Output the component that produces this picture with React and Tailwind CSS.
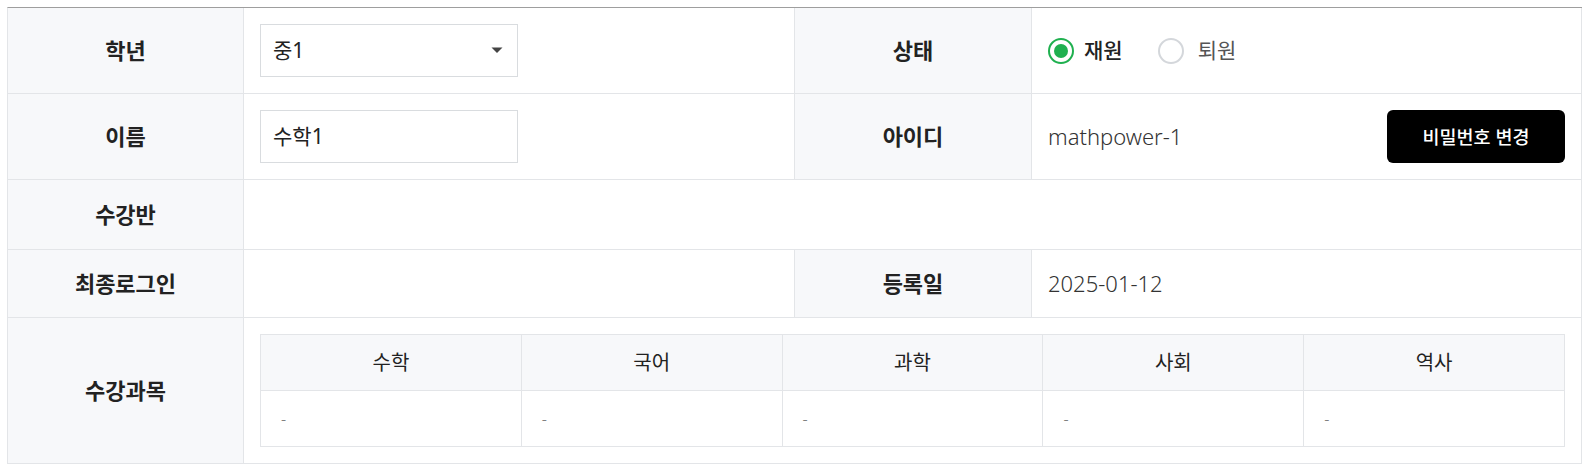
import React from "react";

const font = { fontFamily: '"Noto Sans", "Noto Sans CJK KR", sans-serif' };

function Label({ children, className = "" }) {
  return (
    <div
      className={
        "flex items-center justify-center border-r border-b border-[#e3e5e8] bg-[#f7f8fa] text-[22px] font-bold text-[#222] " +
        className
      }
    >
      {children}
    </div>
  );
}

function Value({ children, className = "" }) {
  return (
    <div
      className={
        "flex items-center border-r border-b border-[#e3e5e8] bg-white px-4 text-[22px] text-[#333] " +
        className
      }
    >
      {children}
    </div>
  );
}

export default function App() {
  const subjects = ["수학", "국어", "과학", "사회", "역사"];
  return (
    <div className="bg-white pt-[7px] px-[7px] h-[470px]" style={font}>
      <div className="grid grid-cols-[236px_551px_237px_550px] border-t border-t-[#9e9e9e] border-l border-l-[#e3e5e8]">
        {/* Row 1 */}
        <Label className="h-[86px]">학년</Label>
        <Value className="h-[86px]">
          <div className="flex h-[53px] w-[258px] items-center justify-between border border-[#d9dcdf] bg-white pl-3 pr-3">
            <span className="text-[21px] text-[#222]">중1</span>
            <svg width="12" height="7" viewBox="0 0 12 7" className="mr-[2px]">
              <path d="M0.5 0.5 L11.5 0.5 L6 6 Z" fill="#444" />
            </svg>
          </div>
        </Value>
        <Label className="h-[86px]">상태</Label>
        <Value className="h-[86px]">
          <div className="flex items-center text-[21px]">
            <span className="flex h-[26px] w-[26px] items-center justify-center rounded-full border-2 border-[#1fb04f]">
              <span className="h-[14px] w-[14px] rounded-full bg-[#1fb04f]" />
            </span>
            <span className="ml-[10px] font-medium text-[#222]">재원</span>
            <span className="ml-[35px] h-[26px] w-[26px] rounded-full border-2 border-[#d4d7db]" />
            <span className="ml-[14px] text-[#555]">퇴원</span>
          </div>
        </Value>

        {/* Row 2 */}
        <Label className="h-[86px]">이름</Label>
        <Value className="h-[86px]">
          <div className="flex h-[53px] w-[258px] items-center border border-[#d9dcdf] bg-white px-3">
            <span className="text-[21px] text-[#222]">수학1</span>
          </div>
        </Value>
        <Label className="h-[86px]">아이디</Label>
        <Value className="h-[86px] justify-between">
          <span className="font-light text-[#333]">mathpower-1</span>
          <button className="flex h-[53px] w-[178px] items-center justify-center rounded-[6px] bg-black text-[18.5px] font-medium text-white">
            비밀번호 변경
          </button>
        </Value>

        {/* Row 3 */}
        <Label className="h-[70px]">수강반</Label>
        <Value className="col-span-3 h-[70px]" />

        {/* Row 4 */}
        <Label className="h-[68px]">최종로그인</Label>
        <Value className="h-[68px]" />
        <Label className="h-[68px]">등록일</Label>
        <Value className="h-[68px]">
          <span className="font-light text-[#333]">2025-01-12</span>
        </Value>

        {/* Row 5 */}
        <Label className="h-[146px]">수강과목</Label>
        <Value className="col-span-3 h-[146px]">
          <div className="grid w-full grid-cols-5 border-t border-l border-[#e3e5e8]">
            {subjects.map((s) => (
              <div
                key={s}
                className="flex h-[56px] items-center justify-center border-r border-b border-[#e3e5e8] bg-[#f7f8fa] text-[20px] text-[#222]"
              >
                {s}
              </div>
            ))}
            {subjects.map((s) => (
              <div
                key={s + "-v"}
                className="flex h-[56px] items-center border-r border-b border-[#e3e5e8] bg-white pl-5 text-[16px] font-light text-[#777]"
              >
                -
              </div>
            ))}
          </div>
        </Value>
      </div>
    </div>
  );
}
